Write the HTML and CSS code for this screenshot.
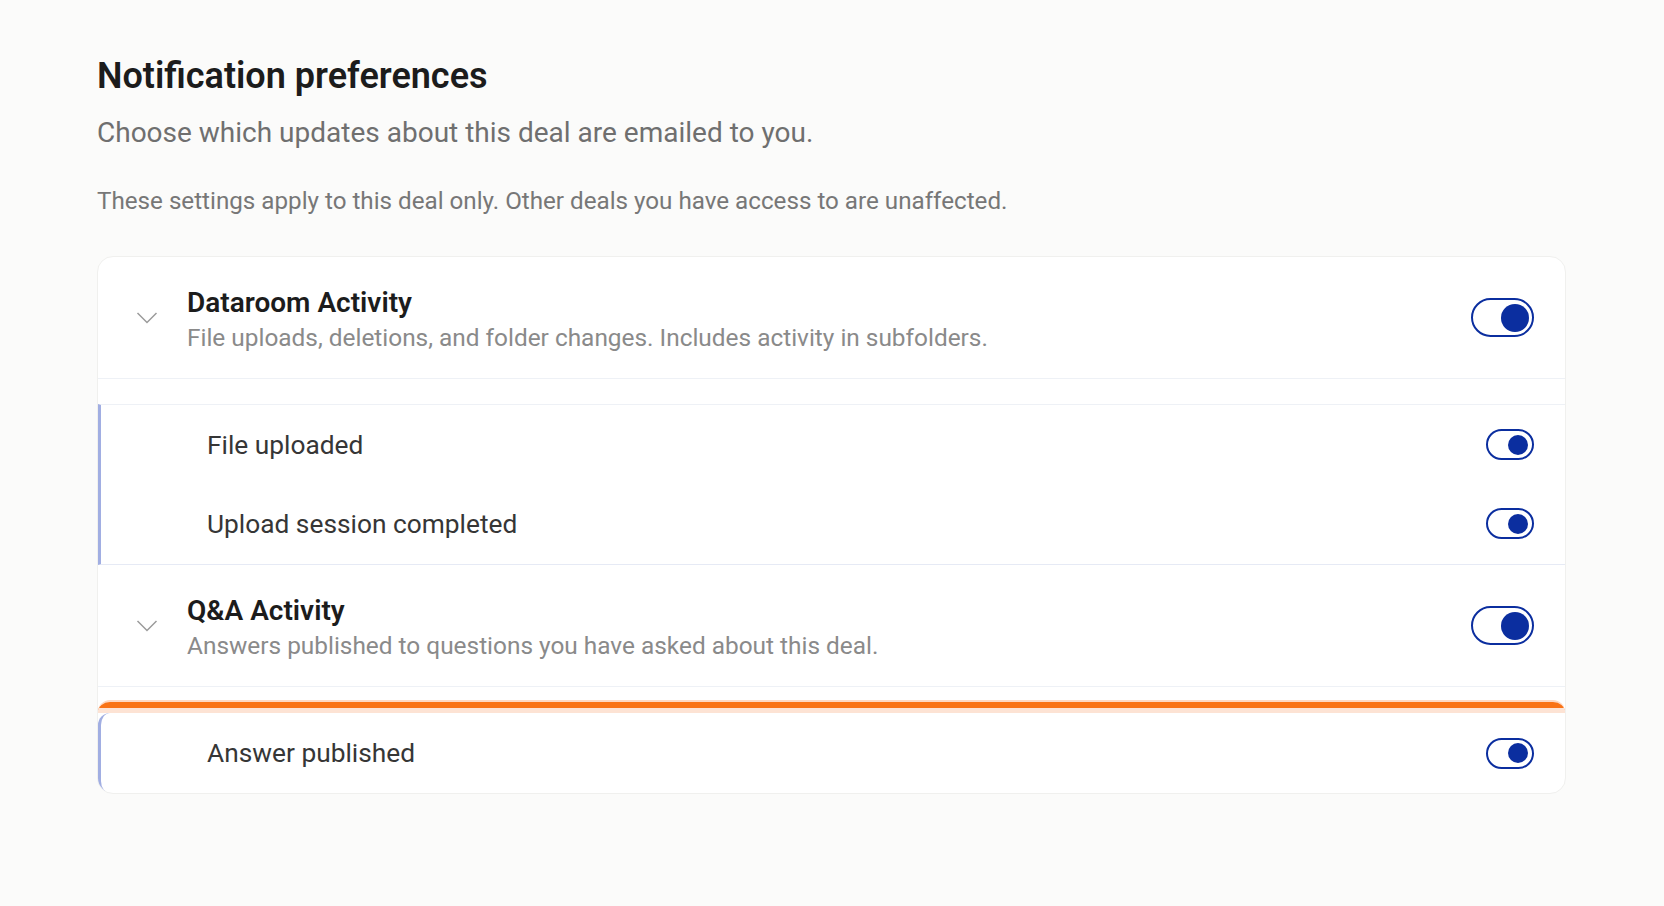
FILE: index.html
```html
<!DOCTYPE html>
<html lang="en">
<head>
    <meta charset="UTF-8">
    <meta name="viewport" content="width=device-width, initial-scale=1.0">
    <title>Notification preferences</title>
    <link rel="stylesheet" href="styles.css">
</head>
<body>
    <main class="page">
        <h1 class="page-title">Notification preferences</h1>
        <p class="page-subtitle">Choose which updates about this deal are emailed to you.</p>
        <p class="page-note">These settings apply to this deal only. Other deals you have access to are unaffected.</p>

        <div class="card">
            <!-- Dataroom -->
            <div class="group-head">
                <span class="chevron">
                    <svg width="22" height="14" viewBox="0 0 22 14"><path d="M1.5 2 L11 11.5 L20.5 2" fill="none" stroke="#9b9b9b" stroke-width="1.5"/></svg>
                </span>
                <div class="group-text">
                    <div class="group-title">Dataroom Activity</div>
                    <div class="group-desc">File uploads, deletions, and folder changes. Includes activity in subfolders.</div>
                </div>
                <span class="toggle toggle-lg on"><span class="knob"></span></span>
            </div>
            <div class="sub">
                <div class="sub-row">
                    <span class="sub-label">File uploaded</span>
                    <span class="toggle toggle-sm on"><span class="knob"></span></span>
                </div>
                <div class="sub-row">
                    <span class="sub-label">Upload session completed</span>
                    <span class="toggle toggle-sm on"><span class="knob"></span></span>
                </div>
            </div>

            <!-- Q&A -->
            <div class="group-head">
                <span class="chevron">
                    <svg width="22" height="14" viewBox="0 0 22 14"><path d="M1.5 2 L11 11.5 L20.5 2" fill="none" stroke="#9b9b9b" stroke-width="1.5"/></svg>
                </span>
                <div class="group-text">
                    <div class="group-title">Q&amp;A Activity</div>
                    <div class="group-desc">Answers published to questions you have asked about this deal.</div>
                </div>
                <span class="toggle toggle-lg on"><span class="knob"></span></span>
            </div>
            <div class="drop-indicator"></div>
            <div class="sub sub-last">
                <div class="sub-row">
                    <span class="sub-label">Answer published</span>
                    <span class="toggle toggle-sm on"><span class="knob"></span></span>
                </div>
            </div>
        </div>
    </main>
</body>
</html>
```

FILE: styles.css
```css
body {
    margin: 0;
    background-color: #fbfbfa;
    font-family: Roboto, "Liberation Sans", Arial, sans-serif;
    color: #1f1f1f;
}
.page {
    padding: 54px 98px 60px 97px;
}
.page-title {
    margin: 0;
    font-size: 36px;
    line-height: 44px;
    font-weight: 600;
    color: #1c1c1c;
}
.page-subtitle {
    margin: 18px 0 0;
    font-size: 28px;
    line-height: 34px;
    color: #6f6f6f;
}
.page-note {
    margin: 36px 0 0;
    font-size: 24.2px;
    line-height: 30px;
    color: #777;
}
.card {
    margin-top: 40px;
    background-color: #fff;
    border: 1px solid #f0f0ee;
    border-radius: 16px;
    overflow: hidden;
}
.group-head {
    display: flex;
    align-items: center;
    height: 121px;
    padding: 0 31px 0 38px;
    border-bottom: 1px solid #eef1f6;
}
.chevron {
    display: flex;
    width: 22px;
    margin-right: 29px;
}
.group-text {
    flex: 1;
    padding-top: 4px;
}
.group-title {
    font-size: 28px;
    line-height: 32px;
    font-weight: 600;
    color: #1c1c1c;
}
.group-desc {
    margin-top: 4px;
    font-size: 24.4px;
    line-height: 30px;
    color: #8a8a8a;
}
.sub {
    margin-top: 25px;
    padding-bottom: 1px;
    border-top: 1px solid #eef1f6;
    border-bottom: 1px solid #e6eaf5;
    border-left: 3px solid #a1aee2;
}
.sub-row {
    display: flex;
    align-items: center;
    height: 79px;
    padding: 0 31px 0 106px;
}
.sub-label {
    flex: 1;
    font-size: 26.3px;
    color: #363636;
}
.drop-indicator {
    margin-top: 13px;
    height: 6px;
    background-color: #f97316;
    border-top: 2px solid #fdd9c4;
    border-bottom: 5px solid #fde3d4;
    border-radius: 12px 12px 0 0;
}
.sub-last {
    margin-top: 0;
    padding-bottom: 0;
    border-top: none;
    border-bottom: none;
    border-radius: 12px;
}
.sub-last .sub-row {
    height: 80px;
}
.toggle {
    display: flex;
    align-items: center;
    justify-content: flex-end;
    box-sizing: border-box;
    border: 2px solid #0b2e9f;
    border-radius: 999px;
    background-color: #fff;
}
.toggle .knob {
    display: block;
    border-radius: 50%;
    background-color: #0b2e9f;
}
.toggle-lg {
    width: 63px;
    height: 39px;
    padding: 0 3.5px;
}
.toggle-lg .knob {
    width: 28px;
    height: 28px;
}
.toggle-sm {
    width: 48px;
    height: 31px;
    padding: 0 4px;
}
.toggle-sm .knob {
    width: 20px;
    height: 20px;
}
```
